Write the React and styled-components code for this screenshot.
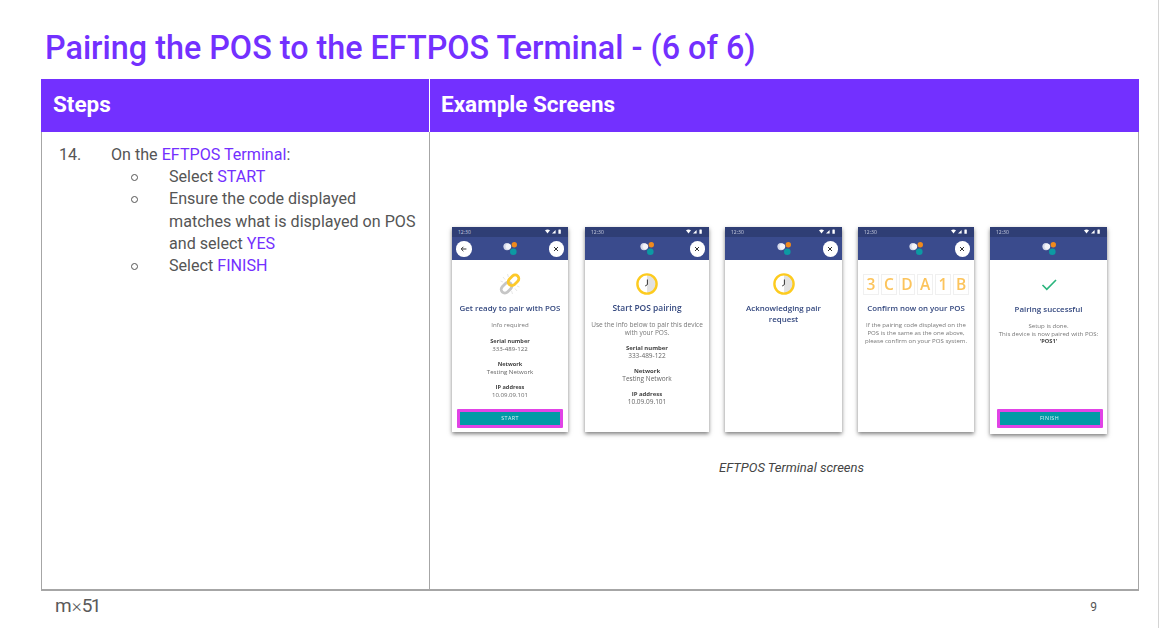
import { createGlobalStyle, styled } from "styled-components";

const PURPLE = "#7330ff";

const GlobalStyle = createGlobalStyle`
  html, body {
    margin: 0;
    padding: 0;
    background: #fff;
  }
  body {
    font-family: Roboto, "Liberation Sans", sans-serif;
  }
`;

const Slide = styled.div`
  width: 1159px;
  height: 628px;
  box-sizing: border-box;
  border-right: 1px solid #d4d4d4;
  padding: 29px 19px 0 41px;
  overflow: hidden;
`;

const Title = styled.h1`
  margin: 0 0 12px 4px;
  height: 38px;
  font-size: 32.35px;
  line-height: 38px;
  font-weight: 500;
  color: ${PURPLE};
`;

const Table = styled.div`
  display: grid;
  grid-template-columns: 389px 709px;
  grid-template-rows: 53px 459px;
  width: 1098px;
`;

const HeadCell = styled.div`
  box-sizing: border-box;
  background: ${PURPLE};
  color: #fff;
  font-size: 22.5px;
  font-weight: 700;
  line-height: 51px;
  padding-left: ${(p) => p.$pad}px;
  border-right: ${(p) => (p.$divider ? "1px solid #fff" : "0")};
`;

const StepsCell = styled.div`
  box-sizing: border-box;
  border: solid #a6a6a6;
  border-width: 0 1px 2px 1px;
  padding: 12px 10px 0 17px;
  font-size: 16.12px;
  line-height: 22.2px;
  color: #555;
`;

const ScreensCell = styled.div`
  box-sizing: border-box;
  border: solid #a6a6a6;
  border-width: 0 1px 2px 0;
  padding: 95px 0 0 22px;
`;

const StepRow = styled.div`
  display: flex;
`;

const StepNumber = styled.span`
  width: 52px;
  flex: none;
`;

const SubList = styled.ul`
  list-style: none;
  margin: 0;
  padding: 0 0 0 20px;
`;

const SubItem = styled.li`
  position: relative;
  padding-left: 38px;
  &::before {
    content: "";
    position: absolute;
    left: 0;
    top: 8px;
    width: 5px;
    height: 5px;
    border: 1px solid #555;
    border-radius: 50%;
  }
`;

const Hl = styled.span`
  color: ${PURPLE};
`;

const PhoneRow = styled.div`
  display: flex;
  gap: 16px;
  align-items: flex-start;
  filter: blur(0.35px);
`;

const Phone = styled.div`
  width: ${(p) => p.$w}px;
  height: ${(p) => p.$h}px;
  margin-right: ${(p) => p.$mr || 0}px;
  display: flex;
  flex-direction: column;
  background: #fff;
  box-shadow: 0 2px 4px rgba(0, 0, 0, 0.5);
  font-family: "Open Sans", sans-serif;
  font-size: ${(p) => p.$fs}px;
  text-align: center;
  color: #555;
`;

const StatusBar = styled.div`
  height: 10px;
  background: #2f3e75;
  color: #c9cee0;
  display: flex;
  align-items: center;
  justify-content: space-between;
  padding: 0 6px 0 6px;
  font-size: 5px;
`;

const AppBar = styled.div`
  position: relative;
  height: 23px;
  background: #3a4b8d;
  display: flex;
  align-items: center;
  justify-content: center;
`;

const RoundButton = styled.div`
  position: absolute;
  top: 4px;
  ${(p) => (p.$left ? "left: 4px;" : "right: 4px;")}
  width: 15.5px;
  height: 15.5px;
  border-radius: 50%;
  background: #fff;
  display: flex;
  align-items: center;
  justify-content: center;
`;

const PhoneBody = styled.div`
  flex: 1;
  display: flex;
  flex-direction: column;
  align-items: center;
  padding-top: ${(p) => p.$top}px;
`;

const IconBox = styled.div`
  height: 24px;
  display: flex;
  align-items: center;
  justify-content: center;
`;

const PhoneTitle = styled.div`
  margin-top: 7px;
  font-size: ${(p) => p.$size || 1.3}em;
  line-height: 10.6px;
  font-weight: 600;
  color: #34487f;
  padding: 0 4px;
  white-space: nowrap;
`;

const Info = styled.div`
  margin-top: 7px;
  line-height: 8px;
  color: #777;
  padding: 0 2px;
  white-space: pre-line;
`;

const Field = styled.div`
  margin-top: ${(p) => p.$mt ?? 7.6}px;
  line-height: 7.7px;
  color: #666;
  b {
    display: block;
    font-size: 0.92em;
    font-weight: 700;
    color: #444;
  }
`;

const CodeRow = styled.div`
  display: flex;
  gap: 2px;
  margin: 2px 0 1px;
`;

const CodeBox = styled.div`
  width: 16px;
  height: 21px;
  box-sizing: border-box;
  border: 1px solid #f0f0f0;
  color: #fcc45c;
  font-size: 15.5px;
  font-weight: 600;
  line-height: 19px;
`;

const ActionButton = styled.div`
  margin: auto 0 ${(p) => p.$bottom}px ${(p) => p.$shift || 0}px;
  width: ${(p) => p.$w}px;
  height: 19px;
  box-sizing: border-box;
  border: 3px solid #e143e6;
  border-radius: 1px;
  background: #009aa6;
  color: #d8f2f4;
  font-size: 5.4px;
  line-height: 13px;
  letter-spacing: 0.4px;
`;

const Caption = styled.div`
  margin-top: 26px;
  padding-left: 267px;
  font-size: 13px;
  line-height: 16px;
  font-style: italic;
  color: #444;
`;

const Footer = styled.div`
  display: flex;
  justify-content: space-between;
  align-items: center;
  height: 30px;
  padding: 1px 42px 0 14px;
`;

const Logo = styled.div`
  margin-top: -2px;
  font-size: 19px;
  line-height: 30px;
  color: #5a5a5a;
  span {
    font-weight: 300;
  }
  i {
    font-style: normal;
    letter-spacing: -1.5px;
  }
`;

const PageNumber = styled.div`
  font-size: 12px;
  color: #555;
`;

function StatusIcons() {
  return (
    <svg width="17" height="6" viewBox="0 0 17 6">
      <path d="M0 1.2 Q2.5 -.4 5 1.2 L2.5 4.4Z" fill="#fff" />
      <path d="M7 4.6 L10.6 1 V4.6Z" fill="#fff" />
      <rect x="13.4" y=".6" width="2.4" height="4.2" rx=".4" fill="#fff" />
    </svg>
  );
}

function BrandDots() {
  return (
    <svg width="16" height="16" viewBox="0 0 16 16">
      <circle cx="5" cy="5.6" r="3.6" fill="#d5d9ea" />
      <circle cx="6.4" cy="5.6" r="2.8" fill="#f2f3f8" />
      <circle cx="12.3" cy="3.8" r="2.7" fill="#f08a1d" />
      <circle cx="11.3" cy="10.8" r="3.3" fill="#0c9aa3" />
    </svg>
  );
}

function CloseIcon() {
  return (
    <svg width="6" height="6" viewBox="0 0 6 6">
      <path d="M1 1 L5 5 M5 1 L1 5" stroke="#333" strokeWidth="1" />
    </svg>
  );
}

function BackIcon() {
  return (
    <svg width="7" height="6" viewBox="0 0 7 6">
      <path d="M6.4 3 H1.4 M3.4 .8 L1.2 3 L3.4 5.2" fill="none" stroke="#333" strokeWidth="1" />
    </svg>
  );
}

function LinkIcon() {
  return (
    <svg width="24" height="24" viewBox="0 0 24 24">
      <g stroke="#dcdcdc" strokeWidth=".7">
        <path d="M5 5 L7 7.5 M2.5 9 L5 10 M9.5 2 L10.4 5 M19 19 L17 16.5 M21.5 15 L19 14 M14.5 22 L13.6 19" />
      </g>
      <rect x="2.5" y="12" width="12" height="7.4" rx="3.7" transform="rotate(-45 8.5 15.7)" fill="none" stroke="#c6c6c6" strokeWidth="2.8" />
      <rect x="9.5" y="4.6" width="12" height="7.4" rx="3.7" transform="rotate(-45 15.5 8.3)" fill="none" stroke="#fdc92a" strokeWidth="2.8" />
    </svg>
  );
}

function ClockIcon() {
  return (
    <svg width="24" height="24" viewBox="0 0 24 24">
      <circle cx="12" cy="12" r="9.6" fill="#fff" />
      <path d="M12 2.4 A9.6 9.6 0 0 1 12 21.6Z" fill="#e2e2e2" />
      <circle cx="12" cy="12" r="9.6" fill="none" stroke="#fdcb1f" strokeWidth="2.4" />
      <path d="M12.4 7.5 V12.6 L10.2 14" fill="none" stroke="#333" strokeWidth="1" />
    </svg>
  );
}

function CheckIcon() {
  return (
    <svg width="16" height="12" viewBox="0 0 16 12">
      <path d="M1.5 6 L5.8 10.4 L15 1" fill="none" stroke="#2ab57d" strokeWidth="1.6" />
    </svg>
  );
}

function PhoneFrame({ w, h = 205, mr, fs = 6.1, back, close = true, top = 12, children }) {
  return (
    <Phone $w={w} $h={h} $mr={mr} $fs={fs}>
      <StatusBar>
        <span>12:30</span>
        <StatusIcons />
      </StatusBar>
      <AppBar>
        {back && (
          <RoundButton $left>
            <BackIcon />
          </RoundButton>
        )}
        <BrandDots />
        {close && (
          <RoundButton>
            <CloseIcon />
          </RoundButton>
        )}
      </AppBar>
      <PhoneBody $top={top}>{children}</PhoneBody>
    </Phone>
  );
}

function DeviceFields({ first }) {
  return (
    <>
      <Field $mt={first}>
        <b>Serial number</b>333-489-122
      </Field>
      <Field>
        <b>Network</b>Testing Network
      </Field>
      <Field>
        <b>IP address</b>10.09.09.101
      </Field>
    </>
  );
}

export default function App() {
  return (
    <Slide>
      <GlobalStyle />
      <Title>Pairing the POS to the EFTPOS Terminal - (6 of 6)</Title>
      <Table>
        <HeadCell $pad={12} $divider>
          Steps
        </HeadCell>
        <HeadCell $pad={11}>Example Screens</HeadCell>
        <StepsCell>
          <StepRow>
            <StepNumber>14.</StepNumber>
            <div>
              On the <Hl>EFTPOS Terminal</Hl>:
              <SubList>
                <SubItem>
                  Select <Hl>START</Hl>
                </SubItem>
                <SubItem>
                  Ensure the code displayed matches what is displayed on POS and select <Hl>YES</Hl>
                </SubItem>
                <SubItem>
                  Select <Hl>FINISH</Hl>
                </SubItem>
              </SubList>
            </div>
          </StepRow>
        </StepsCell>
        <ScreensCell>
          <PhoneRow>
            <PhoneFrame w={116} mr={1} back>
              <IconBox>
                <LinkIcon />
              </IconBox>
              <PhoneTitle>Get ready to pair with POS</PhoneTitle>
              <Info>Info required</Info>
              <DeviceFields first={9} />
              <ActionButton $w={106} $bottom={4}>
                START
              </ActionButton>
            </PhoneFrame>
            <PhoneFrame w={124} fs={6.5}>
              <IconBox>
                <ClockIcon />
              </IconBox>
              <PhoneTitle>Start POS pairing</PhoneTitle>
              <Info>{"Use the info below to pair this device\nwith your POS."}</Info>
              <DeviceFields first={8} />
            </PhoneFrame>
            <PhoneFrame w={117}>
              <IconBox>
                <ClockIcon />
              </IconBox>
              <PhoneTitle>
                Acknowledging pair
                <br />
                request
              </PhoneTitle>
            </PhoneFrame>
            <PhoneFrame w={116}>
              <CodeRow>
                {["3", "C", "D", "A", "1", "B"].map((c, i) => (
                  <CodeBox key={i}>{c}</CodeBox>
                ))}
              </CodeRow>
              <PhoneTitle $size={1.29}>Confirm now on your POS</PhoneTitle>
              <Info>
                {"If the pairing code displayed on the\nPOS is the same as the one above,\nplease confirm on your POS system."}
              </Info>
            </PhoneFrame>
            <PhoneFrame w={117} h={207} close={false} top={13}>
              <IconBox>
                <CheckIcon />
              </IconBox>
              <PhoneTitle>Pairing successful</PhoneTitle>
              <Info>{"Setup is done.\nThis device is now paired with POS:"}</Info>
              <Field $mt={0}>
                <b>'POS1'</b>
              </Field>
              <ActionButton $w={106} $bottom={6} $shift={2}>
                FINISH
              </ActionButton>
            </PhoneFrame>
          </PhoneRow>
          <Caption>EFTPOS Terminal screens</Caption>
        </ScreensCell>
      </Table>
      <Footer>
        <Logo>
          m<span>×</span>
          <i>51</i>
        </Logo>
        <PageNumber>9</PageNumber>
      </Footer>
    </Slide>
  );
}
